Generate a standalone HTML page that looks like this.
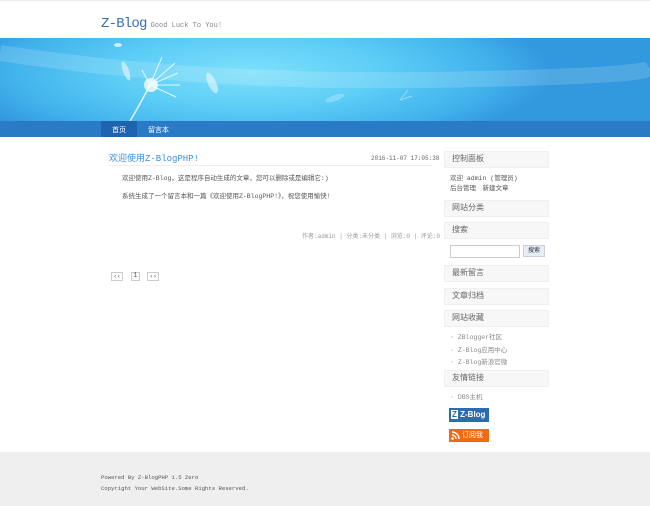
<!DOCTYPE html>
<html><head><meta charset="utf-8"><style>
*{margin:0;padding:0;box-sizing:border-box}
body{width:650px;height:506px;position:relative;background:#fff;font-family:"Liberation Mono","Noto Sans CJK SC",monospace;font-size:7px;color:#555;overflow:hidden}
.a{position:absolute;white-space:nowrap}
.banner{left:0;top:38px;width:650px;height:83px;background:radial-gradient(ellipse 300px 80px at 250px 35px,#7ee0fb 0%,#5ccdf6 45%,#42b2ec 80%,#3299df 100%),#3aa4e6}
.nav{left:0;top:121px;width:650px;height:16px;background:#2b7ac6}
.box{left:444px;width:105px;height:17px;background:#f7f7f7;border:1px solid #f0f0f0;font-size:8px;font-weight:normal;color:#666;padding:3px 7px;line-height:10px}
.lk{color:#888;font-size:6.5px}
.lk:before{content:"· ";color:#3a8ee0}
.pg{top:272px;height:9px;border:1px solid #ccc;font-size:6px;line-height:7px;text-align:center;color:#555}
</style></head><body>
<div class="a" style="left:0;top:0;width:650px;height:1px;background:#eee"></div>
<div class="a" style="left:101px;top:16px;font-family:'Liberation Mono',monospace;font-size:14px;color:#3670b0;letter-spacing:-0.8px">Z-Blog<span style="font-family:'Liberation Mono',monospace;font-size:7px;color:#888;letter-spacing:0;margin-left:4px">Good Luck To You!</span></div>
<div class="a banner">
<svg width="650" height="83" style="position:absolute;left:0;top:0">
<path d="M0 15 Q200 45 420 42 T650 30" stroke="rgba(255,255,255,.15)" stroke-width="16" fill="none"/>
<g stroke="rgba(255,255,255,.8)" stroke-width="1" fill="none">
<path d="M150 47 l25 -22 M150 47 l28 -12 M150 47 l30 0 M150 47 l26 12 M150 47 l12 -28 M150 47 l-8 -15"/>
<path d="M150 47 Q138 70 130 83" stroke-width="1.5"/>
</g>
<circle cx="151" cy="47" r="7" fill="rgba(255,255,255,.75)"/>
<ellipse cx="118" cy="7" rx="4" ry="2" fill="rgba(255,255,255,.7)"/>
<ellipse cx="126" cy="33" rx="3" ry="10" fill="rgba(255,255,255,.5)" transform="rotate(-20 126 33)"/>
<ellipse cx="212" cy="45" rx="4" ry="11" fill="rgba(255,255,255,.5)" transform="rotate(-25 212 45)"/>
<ellipse cx="335" cy="60" rx="10" ry="3" fill="rgba(255,255,255,.25)" transform="rotate(-20 335 60)"/>
<path d="M400 62 l8 -10 M400 62 l12 -4" stroke="rgba(255,255,255,.4)"/>
</svg></div>
<div class="a nav"><div class="a" style="left:101px;top:0;width:36px;height:16px;background:#1f62ad"></div>
<div class="a" style="left:112px;top:4px;color:#fff;font-size:7px">首页</div>
<div class="a" style="left:148px;top:4px;color:#fff;font-size:7px">留言本</div></div>

<div class="a" style="left:109px;top:151px;font-size:9px;color:#3a8ee0">欢迎使用Z-BlogPHP!</div>
<div class="a" style="left:371px;top:155px;font-size:6px;color:#666">2016-11-07 17:05:38</div>
<div class="a" style="left:109px;top:165px;width:323px;height:1px;background:#eee"></div>
<div class="a" style="left:122px;top:172px;font-size:6.5px;color:#555">欢迎使用Z-Blog，这是程序自动生成的文章，您可以删除或是编辑它:)</div>
<div class="a" style="left:122px;top:190px;font-size:6.5px;color:#555">系统生成了一个留言本和一篇《欢迎使用Z-BlogPHP!》，祝您使用愉快!</div>
<div class="a" style="left:302px;top:231px;font-size:6px;color:#999">作者:admin | 分类:未分类 | 浏览:0 | 评论:0</div>
<div class="a pg" style="left:111px;width:12px">‹‹</div>
<div class="a pg" style="left:131px;width:9px;font-size:7px">1</div>
<div class="a pg" style="left:147px;width:12px">››</div>

<div class="a box" style="top:151px">控制面板</div>
<div class="a" style="left:450px;top:174px;font-size:6.5px;color:#555;line-height:10px">欢迎 admin (管理员)<br>后台管理　新建文章</div>
<div class="a box" style="top:200px">网站分类</div>
<div class="a box" style="top:222px">搜索</div>
<div class="a" style="left:450px;top:245px;width:70px;height:13px;border:1px solid #ccc"></div>
<div class="a" style="left:523px;top:245px;width:22px;height:12px;background:#e6eef5;border:1px solid #ccd;font-size:6px;line-height:10px;text-align:center;color:#333">搜索</div>
<div class="a box" style="top:265px">最新留言</div>
<div class="a box" style="top:288px">文章归档</div>
<div class="a box" style="top:310px">网站收藏</div>
<div class="a lk" style="left:450px;top:331px">ZBlogger社区</div>
<div class="a lk" style="left:450px;top:344px">Z-Blog应用中心</div>
<div class="a lk" style="left:450px;top:356px">Z-Blog新浪官微</div>
<div class="a box" style="top:370px">友情链接</div>
<div class="a lk" style="left:450px;top:391px">DBS主机</div>
<div class="a" style="left:449px;top:408px;width:40px;height:14px;background:#2d6bb0;color:#fff;font-size:8px;font-weight:bold;line-height:14px;font-family:'Liberation Sans',sans-serif;padding-left:2px"><span style="background:#fff;color:#2d6bb0;padding:0 1px">Z</span> Z-Blog</div>
<div class="a" style="left:449px;top:429px;width:40px;height:13px;background:#f26a10;color:#fff;font-size:7px;line-height:13px;padding-left:13px;font-family:'Liberation Sans','Noto Sans CJK SC',sans-serif">
<svg width="9" height="9" style="position:absolute;left:2px;top:2px"><circle cx="1.5" cy="7.5" r="1.3" fill="#fff"/><path d="M1 4a4 4 0 0 1 4 4M1 1a7 7 0 0 1 7 7" stroke="#fff" stroke-width="1.4" fill="none"/></svg>订阅我</div>

<div class="a" style="left:0;top:452px;width:650px;height:54px;background:#efefef"></div>
<div class="a" style="left:101px;top:472px;font-size:5.6px;color:#555;line-height:11px">Powered By Z-BlogPHP 1.5 Zero<br>Copyright Your WebSite.Some Rights Reserved.</div>
</body></html>
